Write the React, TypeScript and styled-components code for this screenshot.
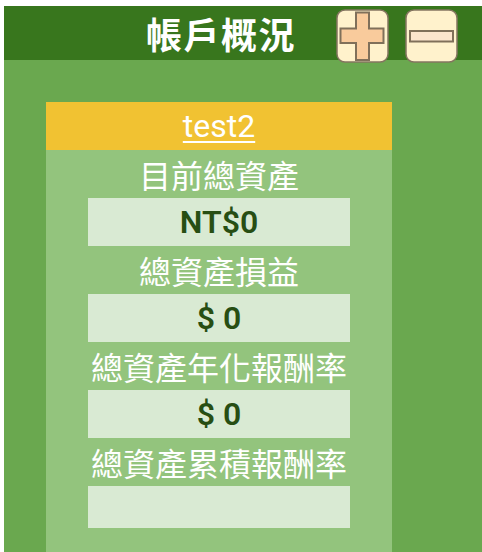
import React from "react";
import styled, { createGlobalStyle } from "styled-components";

const Global = createGlobalStyle`
  html, body { margin: 0; padding: 0; background: #ffffff; }
  body { font-family: "Noto Sans", "Noto Sans CJK TC", sans-serif; }
`;

const Page = styled.div`
  padding: 6px 0 0 4px;
  min-height: 100vh;
  box-sizing: border-box;
  display: flex;
  flex-direction: column;
`;

const Header = styled.header`
  position: relative;
  z-index: 1;
  height: 54px;
  background: #38761d;
  display: flex;
  align-items: flex-start;
`;

const Title = styled.h1`
  margin: 0 0 0 142px;
  align-self: center;
  font-family: "Noto Sans CJK TC", sans-serif;
  font-weight: 700;
  font-size: 36px;
  letter-spacing: 1.5px;
  line-height: 54px;
  color: #ffffff;
`;

const IconButton = styled.button<{ $gap: number }>`
  margin: 3px 0 0 ${(p) => p.$gap}px;
  padding: 0;
  border: none;
  background: transparent;
  width: 53px;
  height: 54px;
  cursor: pointer;
  display: block;
  svg { display: block; }
`;

const Main = styled.main`
  flex: 1;
  background: #6aa84f;
  padding: 42px 0 0 42px;
  display: flex;
  flex-direction: column;
`;

const Card = styled.section`
  flex: 1;
  width: 346px;
  background: #93c47d;
  display: flex;
  flex-direction: column;
  align-items: center;
`;

const CardHead = styled.div`
  align-self: stretch;
  height: 48px;
  background: #f1c232;
  display: flex;
  align-items: center;
  justify-content: center;
`;

const NameLink = styled.a`
  font-family: "Roboto", sans-serif;
  font-size: 32px;
  line-height: 48px;
  color: #ffffff;
  text-decoration: underline;
  text-decoration-thickness: 2px;
  text-underline-offset: 4px;
`;

const Label = styled.div`
  font-family: "Noto Sans CJK TC", sans-serif;
  font-size: 32px;
  line-height: 48px;
  height: 48px;
  color: #ffffff;
  text-align: center;
  white-space: nowrap;
`;

const ValueBox = styled.div<{ $empty?: boolean }>`
  width: 262px;
  height: ${(p) => (p.$empty ? 42 : 48)}px;
  background: #d9ead3;
  font-family: "Roboto", sans-serif;
  font-weight: 600;
  font-size: 32px;
  line-height: 48px;
  color: #274e13;
  text-align: center;
  white-space: pre;
`;

const PlusIcon = () => (
  <svg width="53" height="54" viewBox="0 0 53 54">
    <rect x="1" y="1" width="51" height="52" rx="8" fill="#fff2cc" stroke="#857560" strokeWidth="1.5" />
    <path
      d="M20 3.5 H33 V19.5 H47.5 V34 H33 V51 H20 V34 H4.5 V19.5 H20 Z"
      fill="#f9cb9c"
      stroke="#80705a"
      strokeWidth="2"
      strokeLinejoin="miter"
    />
  </svg>
);

const MinusIcon = () => (
  <svg width="53" height="54" viewBox="0 0 53 54">
    <rect x="1" y="1" width="51" height="52" rx="8" fill="#fff2cc" stroke="#857560" strokeWidth="1.5" />
    <rect x="5" y="22" width="43" height="10.5" fill="#fce5cd" stroke="#80705a" strokeWidth="2" />
  </svg>
);

const rows: { label: string; value: string }[] = [
  { label: "目前總資產", value: "NT$0" },
  { label: "總資產損益", value: "$ 0" },
  { label: "總資產年化報酬率", value: "$ 0" },
  { label: "總資產累積報酬率", value: "" },
];

export default function App() {
  return (
    <>
      <Global />
      <Page>
        <Header>
          <Title>帳戶概況</Title>
          <IconButton $gap={40} aria-label="新增">
            <PlusIcon />
          </IconButton>
          <IconButton $gap={16} aria-label="移除">
            <MinusIcon />
          </IconButton>
        </Header>
        <Main>
          <Card>
            <CardHead>
              <NameLink href="#">test2</NameLink>
            </CardHead>
            {rows.map((r) => (
              <React.Fragment key={r.label}>
                <Label>{r.label}</Label>
                <ValueBox $empty={r.value === ""}>{r.value}</ValueBox>
              </React.Fragment>
            ))}
          </Card>
        </Main>
      </Page>
    </>
  );
}
